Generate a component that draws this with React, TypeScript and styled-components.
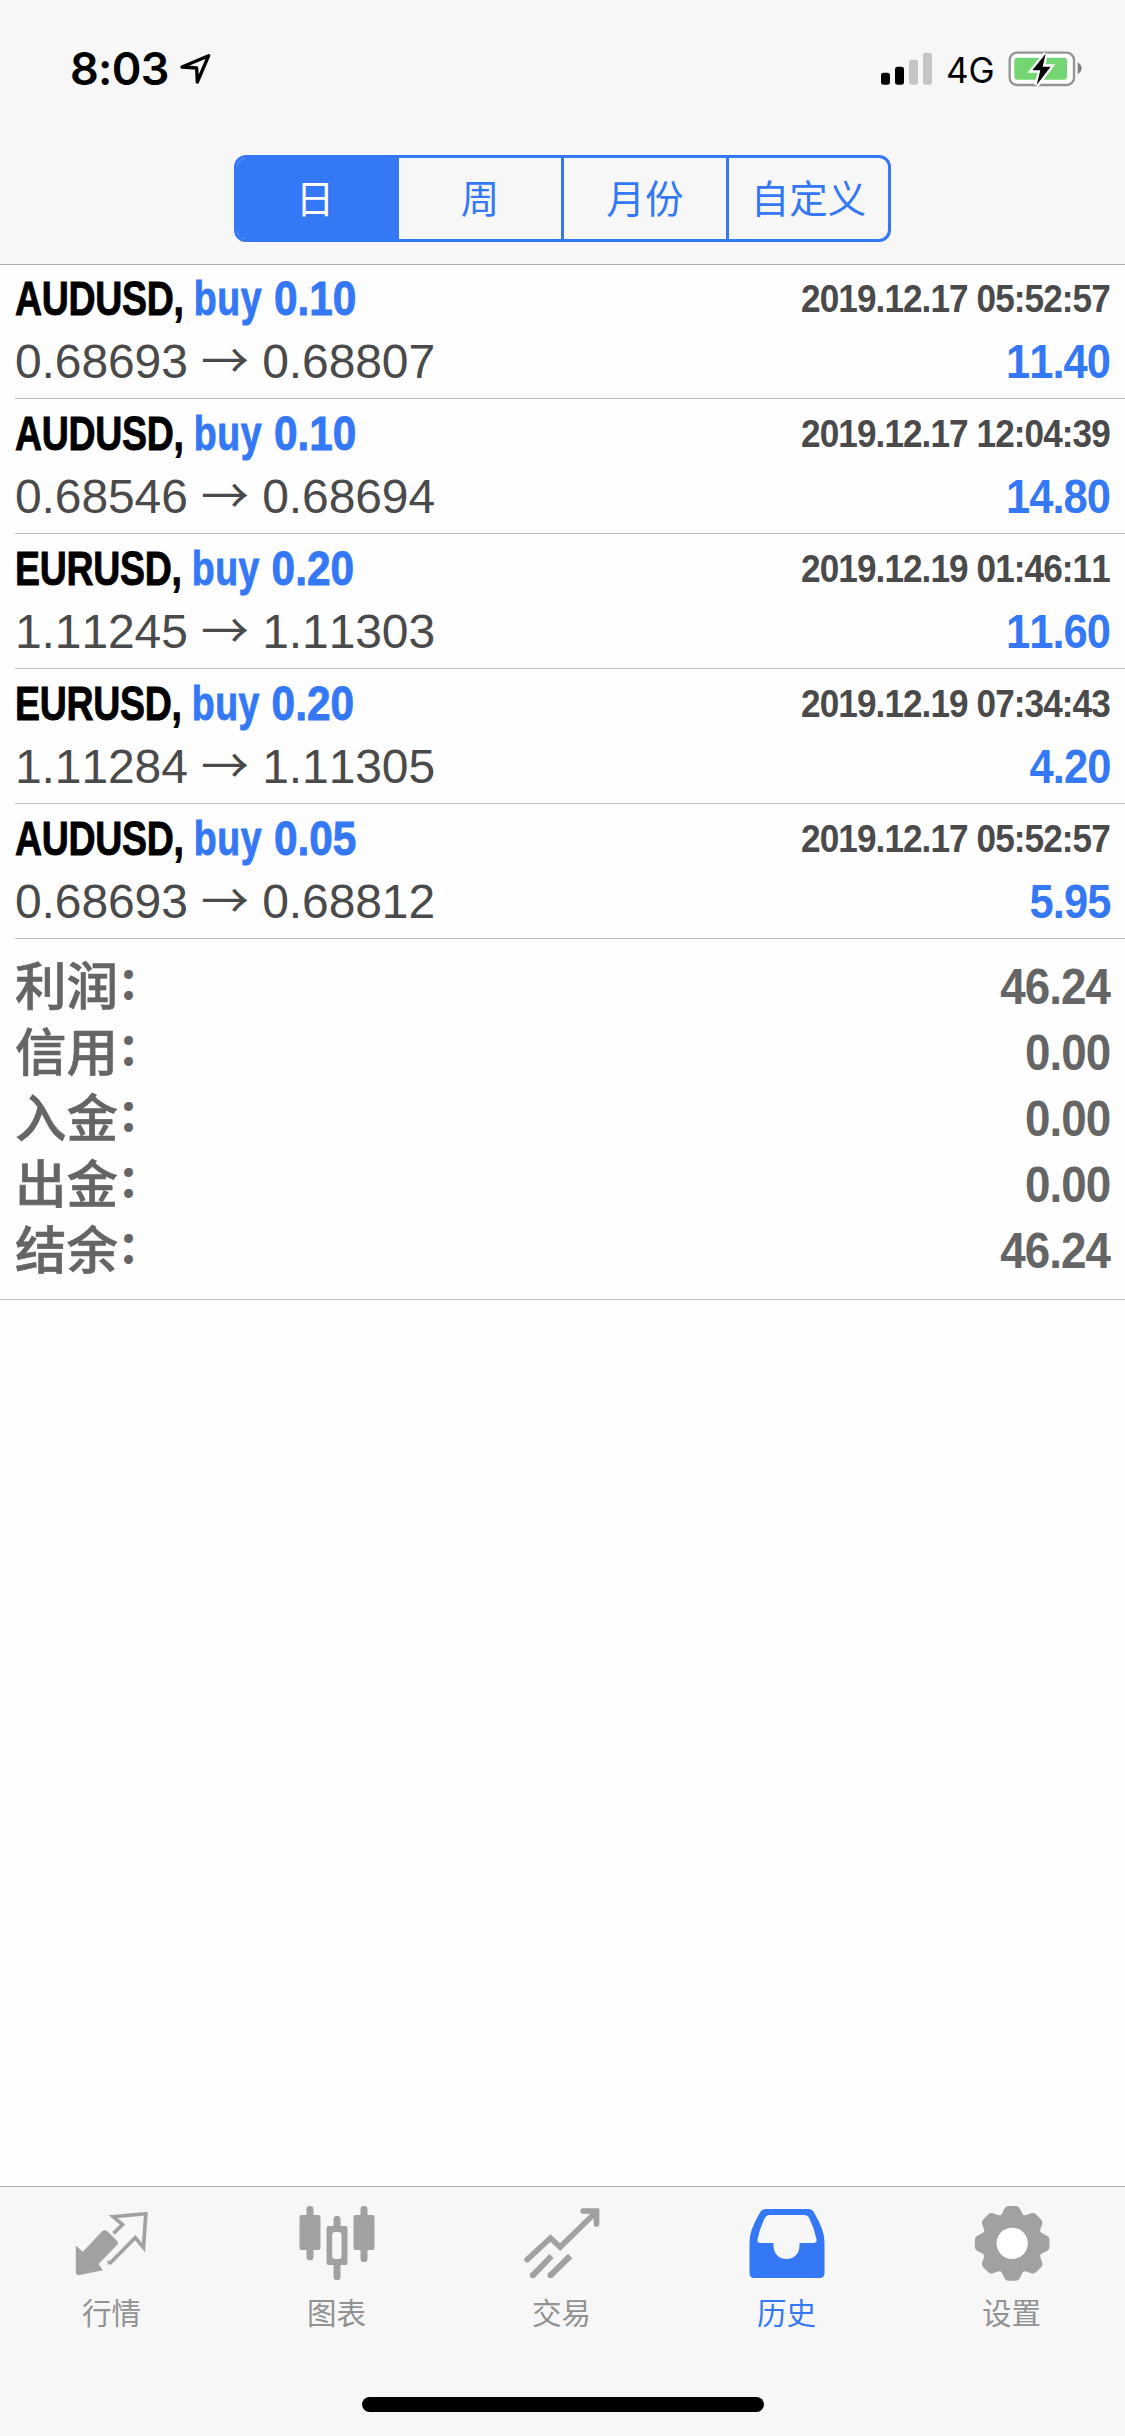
import React from "react";
import styled, { createGlobalStyle } from "styled-components";

const BLUE = "#3478f6";
const CHROME = "#f7f7f7";
const GREY = "#a1a1a1";

const GlobalStyle = createGlobalStyle`
  * { box-sizing: border-box; }
  body {
    margin: 0;
    background: #fefefe;
    font-family: "Liberation Sans", "Noto Sans CJK SC", sans-serif;
  }
`;

const Screen = styled.div`
  display: flex;
  flex-direction: column;
  width: 1125px;
  height: 2436px;
  overflow: hidden;
  background: #fefefe;
`;

const Header = styled.header`
  flex: none;
  height: 265px;
  background: ${CHROME};
  border-bottom: 1px solid #acacac;
`;

const StatusBar = styled.div`
  display: flex;
  align-items: center;
  justify-content: space-between;
  height: 155px;
  padding: 0 42px 17px 70px;
`;

const StatusGroup = styled.div`
  display: flex;
  align-items: center;
`;

const Clock = styled.span`
  font: 600 45px/50px Inter, sans-serif;
  width: 108px;
  letter-spacing: -0.7px;
  white-space: nowrap;
`;

const Network = styled.span`
  font: 400 35px/40px Inter, sans-serif;
  width: 61px;
  margin: 1px 0 0 1px;
`;

const Segmented = styled.div`
  display: grid;
  grid-template-columns: 159px 165px 165px 162px;
  width: 657px;
  height: 87px;
  margin-left: 234px;
  border: 3px solid ${BLUE};
  border-radius: 12px;
  overflow: hidden;
`;

const Segment = styled.button<{ $active?: boolean }>`
  border: 0;
  border-left: 3px solid ${BLUE};
  padding: 0 0 6px;
  font: 400 38.5px/56px "Noto Sans CJK SC", sans-serif;
  color: ${(p) => (p.$active ? "#fff" : BLUE)};
  background: ${(p) => (p.$active ? BLUE : "transparent")};
  &:first-child {
    border-left: 0;
    padding-right: 3px;
  }
`;

const Content = styled.main`
  flex: 1;
`;

const Deal = styled.article`
  height: 135px;
  margin-left: 15px;
  padding: 9px 15px 0 0;
  border-bottom: 1px solid #bcbcbc;
  &:first-child {
    height: 134px;
    padding-top: 8px;
  }
`;

const Line = styled.div<{ $height: number }>`
  display: flex;
  justify-content: space-between;
  height: ${(p) => p.$height}px;
  white-space: nowrap;
`;

const Title = styled.div`
  font-size: 48px;
  line-height: 52px;
  font-weight: 700;
  font-kerning: none;
  letter-spacing: -0.35px;
  color: #000;
  -webkit-text-stroke: 0.9px;
  transform: scaleX(0.78);
  transform-origin: left;
`;

const Side = styled.span`
  color: ${BLUE};
  letter-spacing: 0.7px;
`;

const Lots = styled.span`
  display: inline-block;
  letter-spacing: 0;
  margin-left: 1px;
  transform: scaleX(1.13);
  transform-origin: left;
`;

const Figure = styled.div<{ $size: number; $color: string; $scale: number }>`
  font-size: ${(p) => p.$size}px;
  line-height: 52px;
  font-weight: 700;
  font-kerning: none;
  letter-spacing: -1px;
  color: ${(p) => p.$color};
  transform: scaleX(${(p) => p.$scale});
  transform-origin: right;
`;

const Prices = styled.div`
  font-size: 48px;
  line-height: 52px;
  font-kerning: none;
  letter-spacing: -0.1px;
  color: #4a4a4b;
`;

const Arrow = styled.span`
  font-family: "Noto Sans CJK SC", sans-serif;
  line-height: 0;
`;

const Summary = styled.section`
  height: 361px;
  padding: 15px 15px 0;
  border-bottom: 1px solid #bcbcbc;
`;

const Total = styled.div`
  display: flex;
  justify-content: space-between;
  align-items: center;
  height: 66px;
`;

const TotalLabel = styled.span`
  display: flex;
  font: 500 51.5px/66px "Noto Sans CJK SC", sans-serif;
  height: 66px;
  margin-top: -8px;
  color: #656565;
  -webkit-text-stroke: 0.6px;
`;

const Colon = styled.span`
  font-size: 42px;
  line-height: 60px;
  -webkit-text-stroke: 1.8px;
`;

const TabBar = styled.nav`
  display: flex;
  flex: none;
  height: 188px;
  padding-top: 13px;
  background: ${CHROME};
  border-top: 1px solid #acacac;
`;

const Tab = styled.a<{ $active?: boolean }>`
  flex: 1;
  display: flex;
  flex-direction: column;
  align-items: center;
  color: ${(p) => (p.$active ? BLUE : GREY)};
`;

const TabLabel = styled.span<{ $active?: boolean }>`
  font: 400 29.5px/40px "Noto Sans CJK SC", sans-serif;
  color: ${(p) => (p.$active ? BLUE : "#929292")};
  margin: 1px 2px 0 0;
`;

const HomeArea = styled.div`
  flex: none;
  height: 62px;
  padding-top: 23px;
  background: ${CHROME};
`;

const HomeIndicator = styled.div`
  width: 402px;
  height: 15px;
  margin: 0 auto;
  border-radius: 8px;
  background: #000;
`;

const LocationIcon = () => (
  <svg width="36" height="36" viewBox="534 152 108 108">
    <path d="M546 200 L626 166 L592 245 L590 203 Z" fill="none" stroke="#000" strokeWidth="10" strokeLinejoin="round" />
  </svg>
);

const SignalIcon = () => (
  <svg width="66" height="36" viewBox="240 154 198 108">
    <rect x="246" y="219" width="27" height="36" rx="8" />
    <rect x="288" y="201" width="27" height="54" rx="8" />
    <rect x="330" y="180" width="27" height="75" rx="8" fill="#c5c5c5" />
    <rect x="372" y="159" width="27" height="96" rx="8" fill="#c5c5c5" />
  </svg>
);

const BatteryIcon = () => (
  <svg width="76" height="36" viewBox="622 154 228 108">
    <rect x="630" y="159" width="193" height="97" rx="22" fill="#fff" stroke="#949494" strokeWidth="7" />
    <path d="M834 188 Q846 196 846 206 Q846 216 834 224 Z" fill="#808080" />
    <rect x="644" y="174" width="158" height="66" rx="9" fill="#74d672" />
    <path d="M738 162 L698 212 L722 212 L711 256 L753 201 L729 201 Z" fill="#000" stroke="#fff" strokeWidth="14" paintOrder="stroke" />
  </svg>
);

const TabSvg = ({ box, children }: { box: string; children: React.ReactNode }) => (
  <svg width="90" height="90" viewBox={box} fill="currentColor">
    {children}
  </svg>
);

const QuotesIcon = () => (
  <TabSvg box="82.5 60 270 270">
    <path d="M106 197 L127 215 L185 154 Q193 147 201 154 L229 182 Q236 189 229 196 L174 252 L187 271 L118 285 Q106 287 106 275 Z" />
    <path
      d="M219 160 L246 134 L218 110 L316 101 L309 203 L284 173 L210 248 L201 248"
      fill="none"
      stroke="currentColor"
      strokeWidth="11"
    />
  </TabSvg>
);

const ChartsIcon = () => (
  <TabSvg box="757.5 60 270 270">
    <rect x="798" y="78" width="21" height="163" rx="10" />
    <rect x="777" y="105" width="63" height="105" rx="6" />
    <rect x="960" y="78" width="21" height="168" rx="10" />
    <rect x="939" y="105" width="63" height="105" rx="6" />
    <rect x="879" y="108" width="21" height="40" rx="10" />
    <rect x="879" y="240" width="21" height="60" rx="10" />
    <path
      fillRule="evenodd"
      d="M864 138 H915 Q921 138 921 144 V249 Q921 255 915 255 H864 Q858 255 858 249 V144 Q858 138 864 138 Z M884 156 Q875 156 875 165 V228 Q875 237 884 237 H894 Q903 237 903 228 V165 Q903 156 894 156 Z"
    />
  </TabSvg>
);

const TradeIcon = () => (
  <TabSvg box="112.5 60 270 270">
    <g fill="none" stroke="currentColor" strokeWidth="17" strokeLinecap="round">
      <path d="M140 239 L210 174 L239 201 L346 97" />
      <path d="M308 93 H348 V132" />
    </g>
    <g fill="none" stroke="currentColor" strokeWidth="18">
      <path d="M157 286 L213 228 M210 286 L269 228" />
    </g>
    <circle cx="157" cy="286" r="9" />
    <circle cx="210" cy="286" r="9" />
  </TabSvg>
);

const HistoryIcon = () => (
  <TabSvg box="787.5 60 270 270">
    <path
      fillRule="evenodd"
      d="M856 87 H983 Q994 87 1000 97 Q1032 150 1032 186 V280 Q1032 294 1018 294 H821 Q807 294 807 280 V186 Q807 150 839 97 Q845 87 856 87 Z M868 105 Q858 105 853 114 Q838 143 831 178 Q829 189 840 189 H879 V197 C879 250 957 250 957 197 V189 H999 Q1010 189 1008 178 Q1001 143 986 114 Q981 105 971 105 Z"
    />
  </TabSvg>
);

const GearIcon = () => (
  <TabSvg box="142.5 60 270 270">
    {[0, 45, 90, 135, 180, 225, 270, 315].map((a) => (
      <path
        key={a}
        transform={`rotate(${a} 275 190)`}
        d="M233 112 Q244 106 249 92 Q254 78 264 78 H286 Q296 78 301 92 Q306 106 317 112 L275 190 Z"
      />
    ))}
    <circle cx="275" cy="190" r="86" />
    <circle cx="275" cy="190" r="47" fill="#fff" />
  </TabSvg>
);

const periods = ["日", "周", "月份", "自定义"];

const deals = [
  { symbol: "AUDUSD", lots: "0.10", time: "2019.12.17 05:52:57", open: "0.68693", close: "0.68807", profit: "11.40" },
  { symbol: "AUDUSD", lots: "0.10", time: "2019.12.17 12:04:39", open: "0.68546", close: "0.68694", profit: "14.80" },
  { symbol: "EURUSD", lots: "0.20", time: "2019.12.19 01:46:11", open: "1.11245", close: "1.11303", profit: "11.60" },
  { symbol: "EURUSD", lots: "0.20", time: "2019.12.19 07:34:43", open: "1.11284", close: "1.11305", profit: "4.20" },
  { symbol: "AUDUSD", lots: "0.05", time: "2019.12.17 05:52:57", open: "0.68693", close: "0.68812", profit: "5.95" },
];

const totals = [
  ["利润", "46.24"],
  ["信用", "0.00"],
  ["入金", "0.00"],
  ["出金", "0.00"],
  ["结余", "46.24"],
];

const tabs = [
  { label: "行情", Icon: QuotesIcon },
  { label: "图表", Icon: ChartsIcon },
  { label: "交易", Icon: TradeIcon },
  { label: "历史", Icon: HistoryIcon, active: true },
  { label: "设置", Icon: GearIcon },
];

export default function App() {
  return (
    <Screen>
      <GlobalStyle />
      <Header>
        <StatusBar>
          <StatusGroup>
            <Clock>8:03</Clock>
            <LocationIcon />
          </StatusGroup>
          <StatusGroup>
            <SignalIcon />
            <Network>4G</Network>
            <BatteryIcon />
          </StatusGroup>
        </StatusBar>
        <Segmented>
          {periods.map((p, i) => (
            <Segment key={p} $active={i === 0}>{p}</Segment>
          ))}
        </Segmented>
      </Header>
      <Content>
        {deals.map((d, i) => (
          <Deal key={i}>
            <Line $height={63}>
              <Title>
                {d.symbol}, <Side>buy <Lots>{d.lots}</Lots></Side>
              </Title>
              <Figure $size={38} $color="#4a4a4b" $scale={0.925}>{d.time}</Figure>
            </Line>
            <Line $height={52}>
              <Prices>
                {d.open} <Arrow>→</Arrow> {d.close}
              </Prices>
              <Figure $size={48} $color={BLUE} $scale={0.905}>{d.profit}</Figure>
            </Line>
          </Deal>
        ))}
        <Summary>
          {totals.map(([label, value]) => (
            <Total key={label}>
              <TotalLabel>{label}<Colon>：</Colon></TotalLabel>
              <Figure $size={50} $color="#656565" $scale={0.915}>{value}</Figure>
            </Total>
          ))}
        </Summary>
      </Content>
      <TabBar>
        {tabs.map(({ label, Icon, active }) => (
          <Tab key={label} $active={active}>
            <Icon />
            <TabLabel $active={active}>{label}</TabLabel>
          </Tab>
        ))}
      </TabBar>
      <HomeArea>
        <HomeIndicator />
      </HomeArea>
    </Screen>
  );
}
